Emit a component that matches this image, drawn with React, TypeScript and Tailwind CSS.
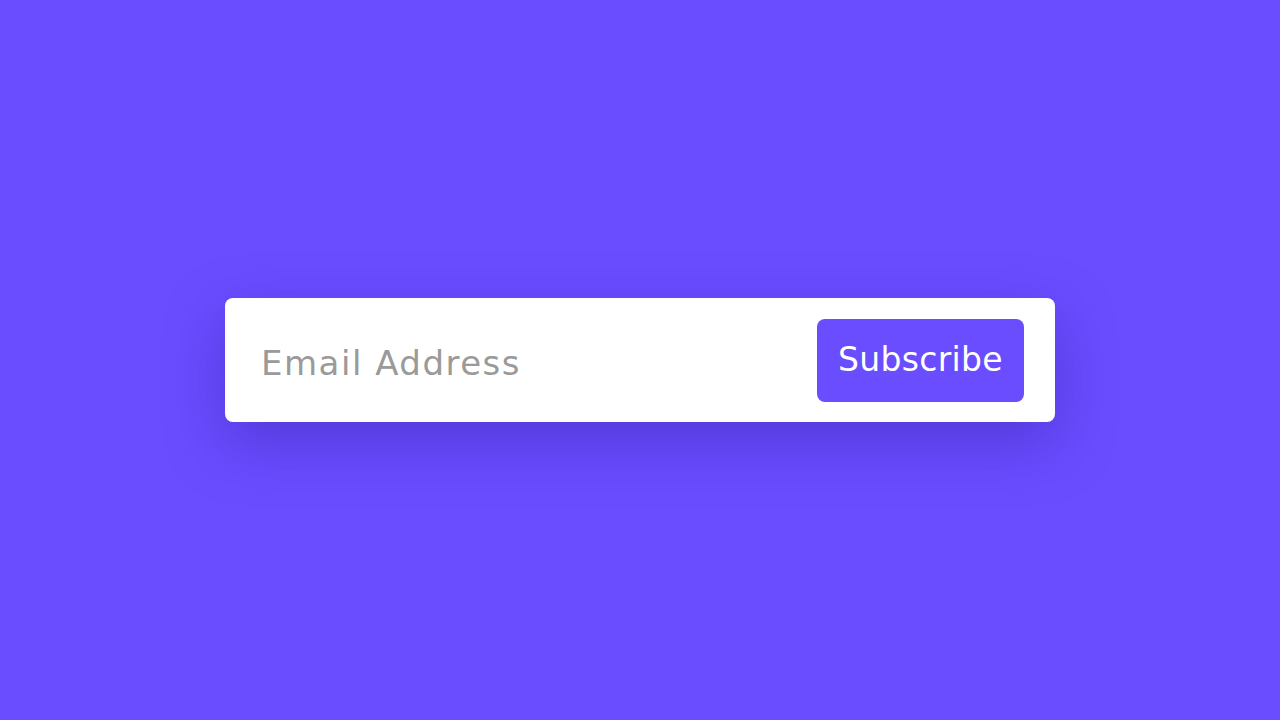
export default function App() {
  return (
    <div className="min-h-screen w-full bg-[#6a4dff] flex items-center justify-center" style={{ fontFamily: '"DejaVu Sans", "Inter", sans-serif' }}>
      <form
        className="w-[830px] h-[124px] bg-white rounded-lg flex items-center justify-between pl-9 pr-[31px] shadow-[0_20px_60px_rgba(40,20,150,0.35)]"
        onSubmit={(e) => e.preventDefault()}
      >
        <input
          type="email"
          placeholder="Email Address"
          className="flex-1 h-full pt-[6px] bg-transparent outline-none text-[34px] tracking-[1.5px] text-[#999] placeholder:text-[#9a9a9a]"
        />
        <button
          type="submit"
          className="w-[207px] h-[83px] rounded-lg bg-[#6a4dff] text-white text-[33px] tracking-[0.3px] flex items-center justify-center"
        >
          Subscribe
        </button>
      </form>
    </div>
  );
}
